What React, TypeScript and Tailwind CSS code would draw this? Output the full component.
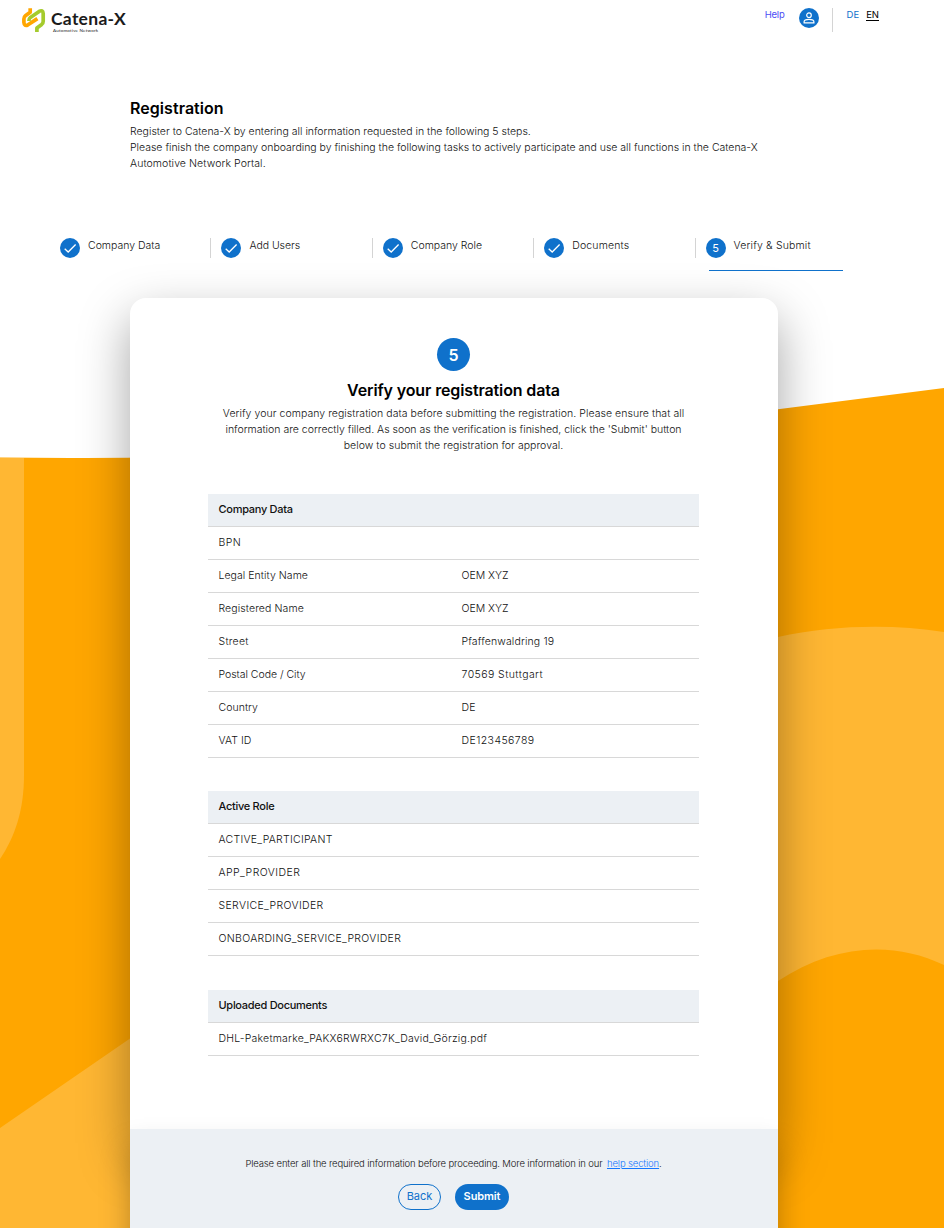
import React from "react";

type Row = { label: string; value?: string; labelClass?: string; valueClass?: string };

const companyRows: Row[] = [
  { label: "BPN", labelClass: "tracking-[0.4px]" },
  { label: "Legal Entity Name", value: "OEM XYZ", labelClass: "tracking-[0.05px]", valueClass: "tracking-[-0.02px]" },
  { label: "Registered Name", value: "OEM XYZ", labelClass: "tracking-[0.1px]", valueClass: "tracking-[-0.02px]" },
  { label: "Street", value: "Pfaffenwaldring 19", labelClass: "tracking-[0.25px]", valueClass: "tracking-[0.14px]" },
  { label: "Postal Code / City", value: "70569 Stuttgart", labelClass: "tracking-[-0.03px]", valueClass: "tracking-[0.43px]" },
  { label: "Country", value: "DE", labelClass: "tracking-[0.05px]", valueClass: "tracking-[0.15px]" },
  { label: "VAT ID", value: "DE123456789", labelClass: "tracking-[0.06px]", valueClass: "tracking-[0.43px]" },
];

const roleRows: Row[] = [
  { label: "ACTIVE_PARTICIPANT", labelClass: "tracking-[0.28px]" },
  { label: "APP_PROVIDER", labelClass: "tracking-[0.45px]" },
  { label: "SERVICE_PROVIDER", labelClass: "tracking-[0.36px]" },
  { label: "ONBOARDING_SERVICE_PROVIDER", labelClass: "tracking-[0.31px]" },
];

const documentRows: Row[] = [
  { label: "DHL-Paketmarke_PAKX6RWRXC7K_David_Görzig.pdf", labelClass: "tracking-[0.21px]" },
];

const steps = [
  { label: "Company Data", className: "tracking-[0px]" },
  { label: "Add Users", className: "tracking-[-0.03px]" },
  { label: "Company Role", className: "tracking-[0px]" },
  { label: "Documents", className: "tracking-[0.16px]" },
  { label: "Verify & Submit", className: "tracking-[0.16px]" },
];

function Background() {
  return (
    <svg className="absolute inset-0 -z-10" width="944" height="1228" viewBox="0 0 944 1228" aria-hidden="true">
      <path d="M0 457.5 L70 458 C300 459 560 437 778 409.3 L944 388 V1228 H0 Z" fill="#ffa600" />
      <path d="M0 458 H24 V775 C24 812 14 838 0 859 Z" fill="#ffb733" />
      <path d="M0 1128 L130 1038.5 L300 921 V1228 H0 Z" fill="#ffb733" />
      <path d="M700 655 L778 637 C832 625 892 624 944 632 V965 C892 940 832 945 778 981 L700 1030 Z" fill="#ffb733" />
    </svg>
  );
}

function Logo() {
  return (
    <div className="flex">
      <svg className="mt-2" width="24" height="25" viewBox="0 0 24 25" fill="none" strokeWidth="3.7" strokeLinejoin="round">
        <path d="M8.2 0.2 V4.2 L3.4 7.8 Q1.9 9 1.9 11 V14.4 Q2.2 18.8 6 16.8 L15.4 10.6" stroke="#ffa600" />
        <path d="M14.9 24 V20 L19.7 16.4 Q21.2 15.2 21.2 13.2 V5.6 Q20.9 1.4 17.1 3.4 L8.4 9.4 Q6.9 10.6 6.9 13" stroke="#a5cb2d" />
      </svg>
      <div className="ml-[5px] mt-[9px] flex flex-col whitespace-nowrap">
        <span className="font-['Lato'] text-[17.5px] font-bold leading-[20px] tracking-[0.28px] text-[#1b1b1b]">Catena-X</span>
        <span className="ml-[2px] font-['Lato'] text-[4.5px] leading-[4px] tracking-[0.2px] text-[#222]">Automotive Network</span>
      </div>
    </div>
  );
}

function Check() {
  return (
    <svg width="20" height="20" viewBox="0 0 20 20" fill="none">
      <path d="M4.7 10.7 L8.2 14 L15.6 6.5" stroke="white" strokeWidth="1.3" />
    </svg>
  );
}

function Table({ title, rows }: { title: string; rows: Row[] }) {
  return (
    <div className="text-[11px] leading-[16px]">
      <div className="flex h-[33px] border-b border-[#d8d8d8] bg-[#ecf0f4] px-[10.5px] pt-[7px] font-medium tracking-[-0.28px] text-[#111]">{title}</div>
      {rows.map(({ label, value, labelClass, valueClass }) => (
        <div key={label} className="grid h-[33px] grid-cols-[243px_1fr] whitespace-nowrap border-b border-[#d8d8d8] px-[10.5px] pt-2 text-[10.5px] font-light text-[#111]">
          <span className={labelClass}>{label}</span>
          <span className={valueClass}>{value}</span>
        </div>
      ))}
    </div>
  );
}

export default function App() {
  return (
    <div className="relative isolate h-[1228px] w-[944px] overflow-hidden bg-white font-['Inter',sans-serif] text-[#111]">
      <Background />

      <header className="flex h-[98px] items-start justify-between pl-[22px] pr-[65px]">
        <Logo />
        <div className="flex items-start pt-2 text-[9.5px] leading-[14px]">
          <a className="tracking-[-0.2px] text-[#4d4df5]">Help</a>
          <span className="ml-[14px] flex size-5 items-center justify-center rounded-full bg-[#0f71cb]">
            <svg width="12" height="12" viewBox="0 0 12 12" fill="none" stroke="white" strokeWidth="1.2">
              <circle cx="6" cy="3.2" r="2.3" />
              <path d="M1.1 10.9 V9.8 C1.1 8.2 3.8 7.4 6 7.4 C8.2 7.4 10.9 8.2 10.9 9.8 V10.9 Z" />
            </svg>
          </span>
          <span className="ml-[13px] h-6 w-px bg-[#d4d4d4]" />
          <span className="ml-[14px] text-[#0f71cb]">DE</span>
          <span className="ml-[7px] h-[13px] border-b border-black text-black">EN</span>
        </div>
      </header>

      <section className="ml-[130px] h-[140px] whitespace-nowrap">
        <h1 className="text-[16px] font-semibold leading-5 tracking-[0.05px] text-black">Registration</h1>
        <p className="mt-1.5 text-[10.5px] font-light leading-4">
          Register to Catena-X by entering all information requested in the following 5 steps.
          <br />
          <span className="tracking-[-0.01px]">
            Please finish the company onboarding by finishing the following tasks to actively participate and use all functions in the Catena-X
          </span>
          <br />
          <span className="tracking-[0.08px]">Automotive Network Portal.</span>
        </p>
      </section>

      <ol className="ml-[60px] grid h-[60px] w-[807px] grid-cols-5 text-[10.5px]">
        {steps.map((step, i) => (
          <li key={step.label} className="flex flex-col">
            <div className="flex h-5">
              <span className="flex size-5 items-center justify-center rounded-full bg-[#0f71cb] text-[11px] text-white">
                {i < 4 ? <Check /> : 5}
              </span>
              <span className="ml-2 whitespace-nowrap font-light leading-[15px]">
                <span className={step.className}>{step.label}</span>
              </span>
              {i < 4 && <span className="ml-auto mr-[10px] h-5 w-px bg-[#d4d4d4]" />}
            </div>
            {i === 4 && <div className="ml-[3px] mt-3 h-px w-[134px] bg-[#0f71cb]" />}
          </li>
        ))}
      </ol>

      <main className="ml-[130px] h-[842px] w-[648px] rounded-t-[16px] bg-white px-[78px] pt-10 shadow-[0_20px_50px_rgba(0,0,0,0.36)]">
        <div className="flex w-[491px] flex-col items-center whitespace-nowrap text-center">
          <span className="flex size-[33px] items-center justify-center rounded-full bg-[#0f71cb] text-[16px] font-semibold text-white">5</span>
          <h2 className="mt-[9px] text-[16px] font-semibold leading-5 tracking-[-0.13px] text-black">Verify your registration data</h2>
          <p className="mt-1.5 text-[10.5px] font-light leading-4">
            <span className="tracking-[0.05px]">
              Verify your company registration data before submitting the registration. Please ensure that all
            </span>
            <br />
            <span className="tracking-[0px]">
              information are correctly filled. As soon as the verification is finished, click the &apos;Submit&apos; button
            </span>
            <br />
            <span className="tracking-[0.05px]">below to submit the registration for approval.</span>
          </p>
        </div>
        <div className="mt-10 flex w-[491px] flex-col gap-[33px]">
          <Table title="Company Data" rows={companyRows} />
          <Table title="Active Role" rows={roleRows} />
          <div className="pt-px">
            <Table title="Uploaded Documents" rows={documentRows} />
          </div>
        </div>
      </main>

      <footer className="relative -mt-[11px] ml-[130px] flex h-[110px] w-[648px] flex-col items-center bg-[#ecf0f4] pr-px pt-[27px] shadow-[0_20px_28px_rgba(0,0,0,0.28)]">
        <p className="whitespace-nowrap text-[9.5px] font-light leading-4 tracking-[-0.135px]">
          Please enter all the required information before proceeding. More information in our{" "}
          <a className="ml-[2px] text-[#1677ff] underline">help section</a>.
        </p>
        <div className="mt-3 flex gap-[14px] text-[11px] leading-4">
          <button className="flex h-[26px] w-[43px] items-center justify-center rounded-full border border-[#0f71cb] pb-[2px] text-[#0f71cb]">Back</button>
          <button className="flex h-[26px] w-[54px] items-center justify-center rounded-full bg-[#0f71cb] pb-[2px] font-semibold tracking-[-0.1px] text-white">Submit</button>
        </div>
      </footer>
    </div>
  );
}
